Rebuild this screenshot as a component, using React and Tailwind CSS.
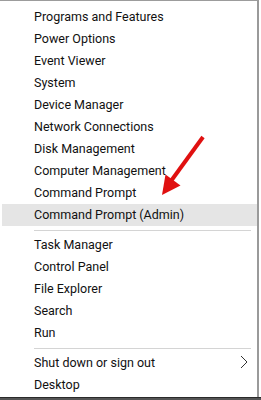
import React from 'react';

const topItems = [
    'Programs and Features',
    'Power Options',
    'Event Viewer',
    'System',
    'Device Manager',
    'Network Connections',
    'Disk Management',
    'Computer Management',
    'Command Prompt',
    'Command Prompt (Admin)',
];

const midItems = ['Task Manager', 'Control Panel', 'File Explorer', 'Search', 'Run'];

const MenuItem = ({ label, active, children }) => (
    <div className={`h-[22px] flex items-center pl-[32px] pr-[10px] ${active ? 'bg-[#e5e5e5]' : ''}`}>
        <span className="flex-1 whitespace-nowrap">{label}</span>
        {children}
    </div>
);

const Separator = () => (
    <div className="h-[8px] flex items-center pl-[32px] pr-[6px]">
        <div className="w-full h-px bg-[#d4d4d4]" />
    </div>
);

const App = () => {
    return (
        <div className="relative w-[261px] h-[400px] overflow-hidden bg-white font-['Roboto',sans-serif] text-[12.5px] text-[#111]">
            <div className="flex h-[397px]">
                {/* Menu panel */}
                <div className="w-[259px] border-t border-[#9c9c9c] border-r-2 border-r-[#9a9a9a] pt-[5px] pl-[2px] bg-white">
                    {topItems.map((item, i) => (
                        <MenuItem key={item} label={item} active={i === topItems.length - 1} />
                    ))}
                    <Separator />
                    {midItems.map(item => (
                        <MenuItem key={item} label={item} />
                    ))}
                    <Separator />
                    <MenuItem label="Shut down or sign out">
                        <svg width="8" height="14" viewBox="0 0 8 14" className="mt-[-2px] mr-[-1px]">
                            <path d="M1 1 L7 7 L1 13" fill="none" stroke="#333" strokeWidth="1" />
                        </svg>
                    </MenuItem>
                    <MenuItem label="Desktop" />
                </div>
                <div className="flex-1 bg-white" />
            </div>
            <div className="h-[1px] bg-[#2a2a2a]" />
            <div className="h-[2px] bg-[#555]" />

            {/* Red annotation arrow */}
            <svg className="absolute left-0 top-0 pointer-events-none" width="261" height="400">
                <line x1="203" y1="137" x2="171" y2="181" stroke="#e01010" strokeWidth="4" />
                <polygon points="162,195 165.5,174.5 180.5,185.5" fill="#e01010" />
            </svg>
        </div>
    );
};

export default App;
